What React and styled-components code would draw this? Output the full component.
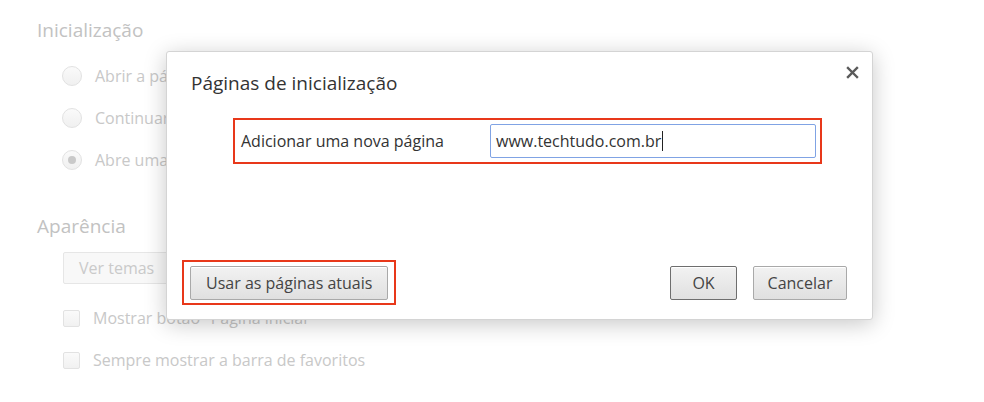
import React from 'react';
import styled, { createGlobalStyle } from 'styled-components';

const GlobalStyle = createGlobalStyle`
  html, body {
    margin: 0;
    padding: 0;
    background: #ffffff;
  }
  body {
    font-family: "Open Sans", "Noto Sans", sans-serif;
    color: #333;
  }
`;

const Page = styled.div`
  position: relative;
  width: 984px;
  height: 402px;
  overflow: hidden;
  background: #fff;
`;

const Settings = styled.div`
  padding: 17px 0 0 37px;
  color: #c6c6c6;
`;

const SectionTitle = styled.h3`
  margin: ${(p) => p.$top || 0}px 0 ${(p) => p.$gap || 14}px;
  font-size: 19px;
  font-weight: 400;
  line-height: 26px;
  color: #c2c2c2;
`;

const OptionList = styled.div`
  display: flex;
  flex-direction: column;
  gap: 22px;
  padding-left: 25px;
`;

const Option = styled.label`
  display: flex;
  align-items: center;
  gap: ${(p) => p.$gap || 13}px;
  font-size: 16px;
  line-height: 20px;
  white-space: nowrap;
  color: #c8c8c8;
`;

const Radio = styled.span`
  box-sizing: border-box;
  flex: none;
  width: 20px;
  height: 20px;
  border-radius: 50%;
  border: 1px solid #e2e2e2;
  background: linear-gradient(#fafafa, #f0f0f0);
  display: flex;
  align-items: center;
  justify-content: center;

  &::after {
    content: '';
    display: ${(p) => (p.$checked ? 'block' : 'none')};
    width: 8px;
    height: 8px;
    border-radius: 50%;
    background: #c9c9c9;
  }
`;

const Checkbox = styled.span`
  box-sizing: border-box;
  flex: none;
  width: 17px;
  height: 17px;
  margin-left: 1px;
  border-radius: 2px;
  border: 1px solid #e2e2e2;
  background: linear-gradient(#fafafa, #f1f1f1);
`;

const GhostButton = styled.div`
  box-sizing: border-box;
  width: 110px;
  height: 32px;
  margin: 0 0 24px 26px;
  padding-left: 15px;
  border: 1px solid #e6e6e6;
  border-radius: 2px;
  background: #f8f8f8;
  font-size: 16px;
  line-height: 30px;
  color: #cacaca;
`;

const Dialog = styled.div`
  position: absolute;
  left: 166px;
  top: 51px;
  box-sizing: border-box;
  width: 707px;
  height: 269px;
  display: flex;
  flex-direction: column;
  background: #fff;
  border: 1px solid #d4d4d4;
  border-radius: 3px;
  box-shadow: 0 4px 22px rgba(0, 0, 0, 0.22);
`;

const DialogTitle = styled.h2`
  margin: 0;
  padding: 18px 24px 0;
  font-size: 19px;
  font-weight: 400;
  line-height: 26px;
  color: #333;
`;

const CloseButton = styled.button`
  position: absolute;
  top: 14px;
  right: 13px;
  width: 13px;
  height: 13px;
  padding: 0;
  border: 0;
  background: none;
  display: flex;
  cursor: pointer;
`;

const DialogBody = styled.div`
  flex: 1;
  padding: 22px 0 0 66px;
`;

const Highlight = styled.div`
  box-sizing: border-box;
  display: ${(p) => (p.$inline ? 'inline-flex' : 'flex')};
  align-items: center;
  width: ${(p) => (p.$width ? `${p.$width}px` : 'auto')};
  height: ${(p) => p.$height}px;
  padding: ${(p) => p.$pad || '0 4px 0 6px'};
  border: 2px solid #e8381a;
`;

const FieldLabel = styled.span`
  width: 249px;
  font-size: 16px;
  color: #333;
`;

const TextInput = styled.div`
  box-sizing: border-box;
  display: flex;
  align-items: center;
  width: 326px;
  height: 34px;
  padding-left: 5px;
  border: 1px solid #80a3e4;
  border-radius: 2px;
  font-size: 16px;
  color: #333;
`;

const Caret = styled.span`
  display: inline-block;
  width: 1px;
  height: 20px;
  margin-left: 1px;
  background: #222;
`;

const Footer = styled.div`
  display: flex;
  align-items: center;
  justify-content: space-between;
  padding: 0 25px 14px 15px;
`;

const ButtonRow = styled.div`
  display: flex;
  gap: 16px;
`;

const Button = styled.button`
  box-sizing: border-box;
  height: 34px;
  width: ${(p) => (p.$width ? `${p.$width}px` : 'auto')};
  padding: 0 ${(p) => (p.$width ? 0 : 15)}px;
  border: 1px solid ${(p) => (p.$default ? '#6e6e6e' : '#a9a9a9')};
  border-radius: 2px;
  background: linear-gradient(#f2f2f2, #e0e0e0);
  font-family: inherit;
  font-size: 16px;
  color: #444;
  box-shadow: inset 0 1px 0 #fff;
  cursor: pointer;
`;

const App = () => {
  return (
    <Page>
      <GlobalStyle />
      <Settings>
        <SectionTitle $gap={23}>Inicialização</SectionTitle>
        <OptionList>
          <Option><Radio />Abrir a página Nova guia</Option>
          <Option><Radio />Continuar de onde parei</Option>
          <Option><Radio $checked />Abre uma página específica</Option>
        </OptionList>
        <SectionTitle $top={43} $gap={13}>Aparência</SectionTitle>
        <GhostButton>Ver temas</GhostButton>
        <OptionList>
          <Option><Checkbox />Mostrar botão "Página inicial"</Option>
          <Option><Checkbox />Sempre mostrar a barra de favoritos</Option>
        </OptionList>
      </Settings>

      <Dialog>
        <DialogTitle>Páginas de inicialização</DialogTitle>
        <CloseButton aria-label="Fechar">
          <svg width="13" height="13" viewBox="0 0 13 13">
            <path d="M2 2 L11 11 M11 2 L2 11" stroke="#5a5a5a" strokeWidth="2.4" strokeLinecap="square" />
          </svg>
        </CloseButton>
        <DialogBody>
          <Highlight $width={589} $height={46}>
            <FieldLabel>Adicionar uma nova página</FieldLabel>
            <TextInput>
              www.techtudo.com.br<Caret />
            </TextInput>
          </Highlight>
        </DialogBody>
        <Footer>
          <Highlight $inline $height={45} $pad="0 6px">
            <Button>Usar as páginas atuais</Button>
          </Highlight>
          <ButtonRow>
            <Button $default $width={67}>OK</Button>
            <Button $width={94}>Cancelar</Button>
          </ButtonRow>
        </Footer>
      </Dialog>
    </Page>
  );
};

export default App;
